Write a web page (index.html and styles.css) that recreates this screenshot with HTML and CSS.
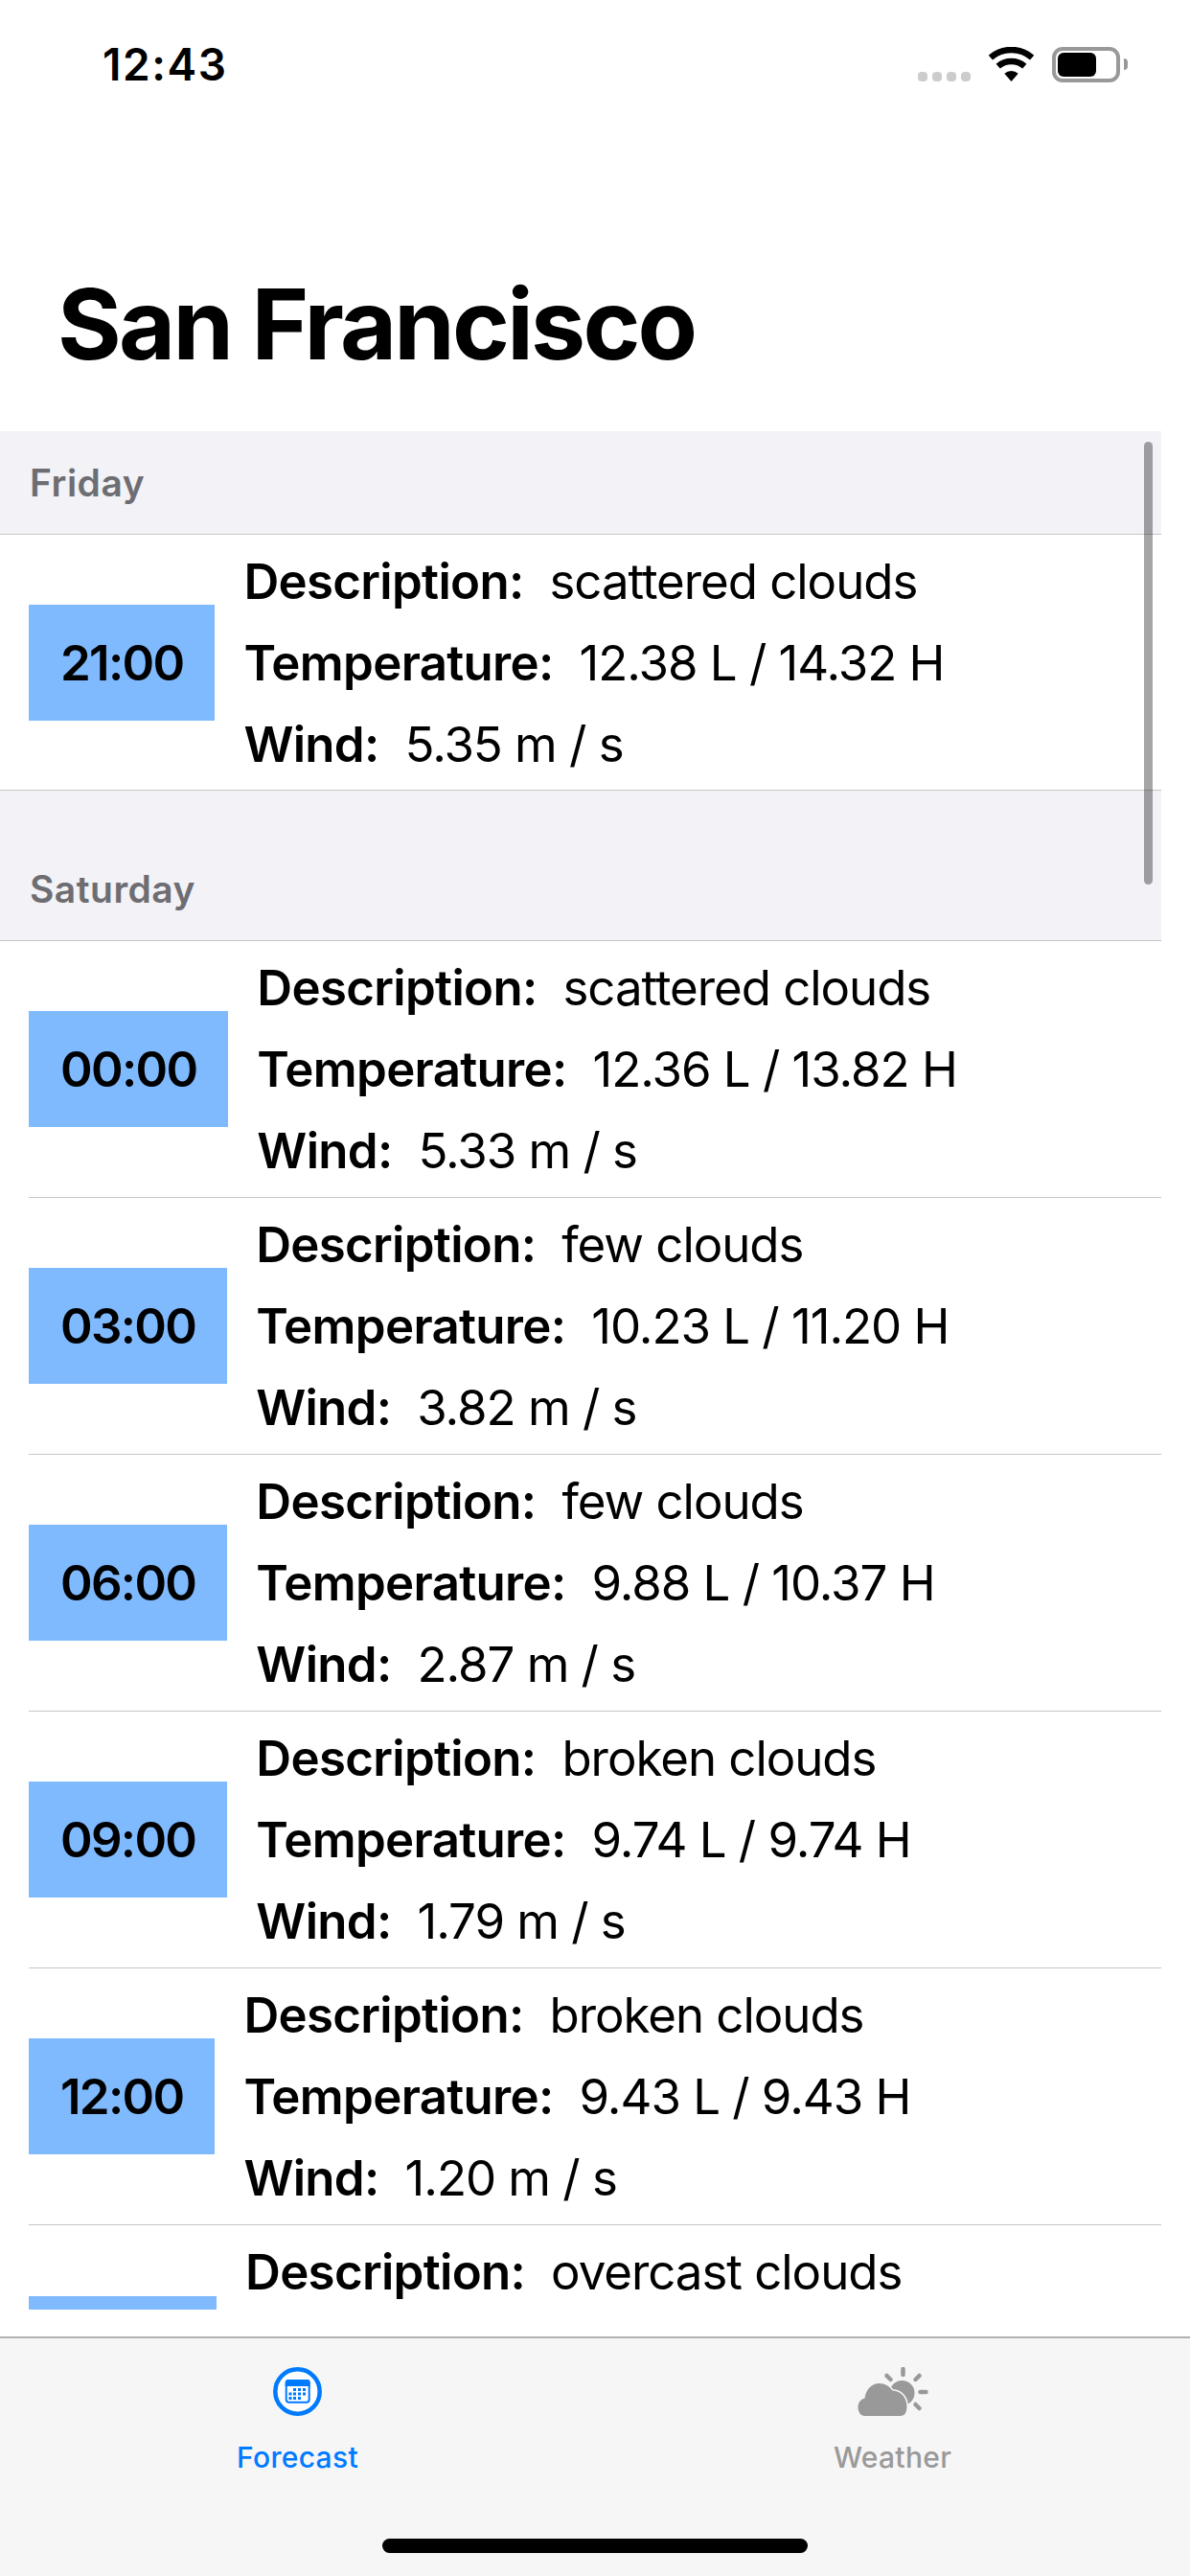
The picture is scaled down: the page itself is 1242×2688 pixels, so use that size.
FILE: index.html
```html
<!DOCTYPE html>
<html>
<head>
	<title>San Francisco</title>
	<link rel="stylesheet" href="styles.css">
</head>
<body>
	<div class="phone">
		<div class="status">
			<div class="clock">12:43</div>
			<div class="status-icons">
				<div class="signal"><i></i><i></i><i></i><i></i></div>
				<svg class="wifi" width="47" height="36" viewBox="0 0 47 36">
					<path d="M1.85 11.1A33 33 0 0 1 45.15 11.1" fill="none" stroke="#000" stroke-width="6.5"/>
					<path d="M9.7 20.15A21 21 0 0 1 37.3 20.15" fill="none" stroke="#000" stroke-width="6.5"/>
					<path d="M23.5 36L16.3 27.7A11 11 0 0 1 30.7 27.7Z" fill="#000"/>
				</svg>
				<div class="battery"><div class="battery-fill"></div></div>
				<div class="battery-cap"></div>
			</div>
		</div>

		<h1 class="title">San Francisco</h1>

		<div class="list">
			<div class="scrollbar"></div>

			<h2 class="day">Friday</h2>
			<div class="row row-last">
				<div class="time">21:00</div>
				<div class="info">
					<div class="line"><b>Description:</b><span>scattered clouds</span></div>
					<div class="line"><b>Temperature:</b><span>12.38 L / 14.32 H</span></div>
					<div class="line"><b>Wind:</b><span>5.35 m / s</span></div>
				</div>
			</div>

			<h2 class="day day-next">Saturday</h2>
			<div class="row">
				<div class="time">00:00</div>
				<div class="info">
					<div class="line"><b>Description:</b><span>scattered clouds</span></div>
					<div class="line"><b>Temperature:</b><span>12.36 L / 13.82 H</span></div>
					<div class="line"><b>Wind:</b><span>5.33 m / s</span></div>
				</div>
			</div>
			<div class="row">
				<div class="time">03:00</div>
				<div class="info">
					<div class="line"><b>Description:</b><span>few clouds</span></div>
					<div class="line"><b>Temperature:</b><span>10.23 L / 11.20 H</span></div>
					<div class="line"><b>Wind:</b><span>3.82 m / s</span></div>
				</div>
			</div>
			<div class="row">
				<div class="time">06:00</div>
				<div class="info">
					<div class="line"><b>Description:</b><span>few clouds</span></div>
					<div class="line"><b>Temperature:</b><span>9.88 L / 10.37 H</span></div>
					<div class="line"><b>Wind:</b><span>2.87 m / s</span></div>
				</div>
			</div>
			<div class="row">
				<div class="time">09:00</div>
				<div class="info">
					<div class="line"><b>Description:</b><span>broken clouds</span></div>
					<div class="line"><b>Temperature:</b><span>9.74 L / 9.74 H</span></div>
					<div class="line"><b>Wind:</b><span>1.79 m / s</span></div>
				</div>
			</div>
			<div class="row">
				<div class="time">12:00</div>
				<div class="info">
					<div class="line"><b>Description:</b><span>broken clouds</span></div>
					<div class="line"><b>Temperature:</b><span>9.43 L / 9.43 H</span></div>
					<div class="line"><b>Wind:</b><span>1.20 m / s</span></div>
				</div>
			</div>
			<div class="row row-cut">
				<div class="time-cut"></div>
				<div class="info">
					<div class="line"><b>Description:</b><span>overcast clouds</span></div>
				</div>
			</div>
		</div>

		<div class="tabs">
			<div class="tab tab-on">
				<svg width="51" height="51" viewBox="0 0 51 51">
					<circle cx="25.5" cy="25.5" r="23.2" fill="#fff" stroke="#007aff" stroke-width="4.5"/>
					<rect x="13.7" y="14" width="24" height="22.7" rx="3" fill="#fff" stroke="#007aff" stroke-width="2"/>
					<path d="M12.7 20V16A3 3 0 0 1 15.7 13H35.7A3 3 0 0 1 38.7 16V20Z" fill="#007aff"/>
					<g fill="#007aff">
						<rect x="21" y="22" width="3" height="3"/><rect x="26" y="22" width="3" height="3"/><rect x="31" y="22" width="3" height="3"/>
						<rect x="16.5" y="26.5" width="3" height="3"/><rect x="21" y="26.5" width="3" height="3"/><rect x="26" y="26.5" width="3" height="3"/><rect x="31" y="26.5" width="3" height="3"/>
						<rect x="16.5" y="31" width="3" height="3"/><rect x="21" y="31" width="3" height="3"/><rect x="26" y="31" width="3" height="3"/>
					</g>
				</svg>
				<div class="tab-label">Forecast</div>
			</div>
			<div class="tab">
				<svg width="80" height="51" viewBox="-1.5 0 80 51">
					<circle cx="48" cy="27" r="13" fill="#999"/>
					<g stroke="#999" stroke-width="4.5" stroke-linecap="round" fill="none">
						<path d="M49 2V8"/>
						<path d="M32 9L36 13"/>
						<path d="M66 9L62 13"/>
						<path d="M67 26H73"/>
						<path d="M62 39L66 43"/>
					</g>
					<path d="M9 51C5 51 2 47 2 42C2 37 5 33.5 9 32.5C10 24 16 17 24 17C30 17 35 20 38 24.5C47 25 53 32 53 41C53 47 51 51 46 51Z" fill="#999" stroke="#f6f6f6" stroke-width="3" paint-order="stroke"/>
				</svg>
				<div class="tab-label">Weather</div>
			</div>
			<div class="home-bar"></div>
		</div>
	</div>
</body>
</html>
```

FILE: styles.css
```css
* {
	box-sizing: border-box;
	font-family: "Inter", "Liberation Sans", sans-serif;
}

body {
	margin: 0;
	background-color: #fff;
	color: #000;
}

.phone {
	display: flex;
	flex-direction: column;
	width: 1242px;
	height: 2688px;
	overflow: hidden;
}

/* status bar */
.status {
	display: flex;
	justify-content: space-between;
	align-items: flex-start;
	height: 132px;
	padding: 41px 65px 0 107px;
}

.clock {
	font-size: 46px;
	line-height: 52px;
	font-weight: 600;
	letter-spacing: 1.6px;
}

.status-icons {
	display: flex;
	align-items: flex-start;
	padding-top: 8px;
}

.signal {
	display: flex;
	gap: 5px;
	margin-top: 26px;
	margin-right: 19px;
}

.signal i {
	width: 10px;
	height: 10px;
	border-radius: 4px;
	background-color: #ccc;
}

.wifi {
	margin-right: 19px;
}

.battery {
	width: 71px;
	height: 37px;
	padding: 2px;
	border: 4px solid #999;
	border-radius: 11px;
}

.battery-fill {
	width: 40px;
	height: 25px;
	border-radius: 6px;
	background-color: #000;
}

.battery-cap {
	width: 4px;
	height: 12px;
	margin: 12px 0 0 4px;
	border-radius: 0 4px 4px 0;
	background-color: #999;
}

.title {
	height: 318px;
	margin: 0;
	padding: 145px 0 0 60px;
	font-size: 102px;
	line-height: 122px;
	font-weight: 700;
	letter-spacing: -2.8px;
}

/* table */
.list {
	position: relative;
	flex: 1;
	width: 1212px;
	overflow: hidden;
}

.scrollbar {
	position: absolute;
	top: 11px;
	right: 9px;
	width: 9px;
	height: 462px;
	border-radius: 5px;
	background-color: rgba(0, 0, 0, .35);
}

.day {
	height: 108px;
	margin: 0;
	padding-top: 31px;
	border-bottom: 1px solid #c6c6c8;
	background-color: #f2f2f7;
	color: #6d6d72;
	font-size: 39px;
	line-height: 46px;
	font-weight: 600;
	letter-spacing: .5px;
	padding-left: 31px;
}

.day-next {
	height: 157px;
	padding-top: 80px;
}

.row {
	display: flex;
	align-items: center;
	gap: 30px;
	height: 268px;
	margin-left: 30px;
	padding: 6px 0;
	border-bottom: 1px solid #c6c6c8;
}

.row-last {
	height: 267px;
	margin-left: 0;
	padding-left: 30px;
}

.row-cut {
	align-items: flex-start;
	height: 116px;
	border-bottom: 0;
}

.time {
	padding: 0 33px;
	background-color: #7fbaff;
	font-size: 51px;
	line-height: 121px;
	font-weight: 600;
	letter-spacing: -1.7px;
	white-space: nowrap;
}

.time-cut {
	width: 196px;
	height: 14px;
	margin-top: 68px;
	background-color: #7fbaff;
}

.line {
	display: flex;
	gap: 27px;
	height: 85px;
	font-size: 51px;
	line-height: 85px;
	letter-spacing: -1.05px;
	white-space: nowrap;
}

.line b {
	font-weight: 600;
	letter-spacing: -.7px;
}

/* tab bar */
.tabs {
	position: relative;
	display: flex;
	height: 250px;
	padding: 30px 0 0 0;
	border-top: 2px solid #b2b2b2;
	background-color: #f6f6f6;
}

.tab {
	display: flex;
	flex-direction: column;
	align-items: center;
	flex: 1;
	color: #999;
}

.tab-on {
	color: #007aff;
}

.tab-label {
	margin-top: 25px;
	font-size: 30px;
	line-height: 36px;
	font-weight: 500;
	letter-spacing: .3px;
}

.home-bar {
	position: absolute;
	left: 399px;
	bottom: 24px;
	width: 444px;
	height: 15px;
	border-radius: 8px;
	background-color: #000;
}
```
